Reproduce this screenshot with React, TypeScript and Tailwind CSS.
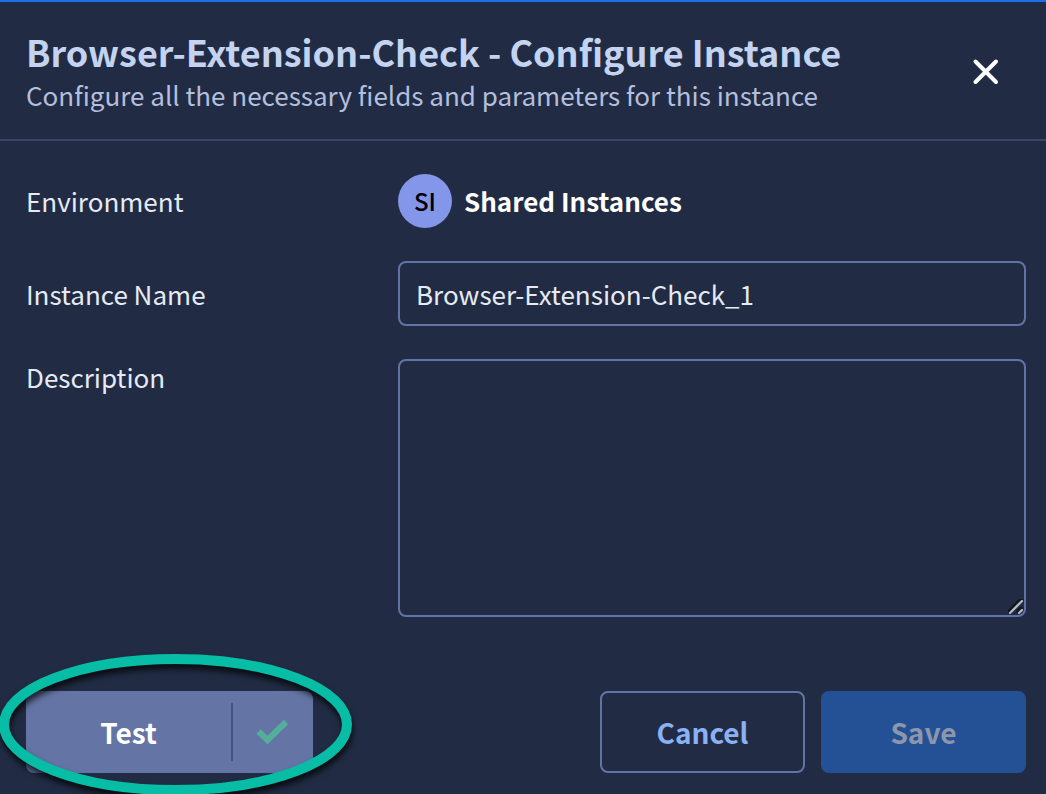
import { useId, useState } from "react";

type Environment = {
    initials: string;
    name: string;
}

const environment: Environment = {
    initials: "SI",
    name: "Shared Instances",
};

const CloseIcon = () => (
    <svg width="28" height="28" viewBox="0 0 28 28" fill="none" stroke="currentColor" strokeWidth="4" strokeLinecap="round" aria-hidden="true">
        <path d="M3.5 3.5L24 24M24 3.5L3.5 24" />
    </svg>
);

const CheckIcon = () => (
    <svg width="34" height="26" viewBox="0 0 34 26" fill="none" stroke="#52b09a" strokeWidth="6" aria-hidden="true">
        <path d="M2.5 12.5L11.5 21L30 3" strokeLinejoin="miter" />
    </svg>
);

const ResizeGrip = () => (
    <svg className="pointer-events-none absolute right-0.5 bottom-0.5 size-4" viewBox="0 0 16 16" fill="none" strokeLinecap="round" aria-hidden="true">
        <path d="M2 12.5L13 1.5M11 12.5L13 10.5" stroke="#0f141f" strokeWidth="5" />
        <path d="M2 14L14 2M11 14L14 11" stroke="#b4b8bf" strokeWidth="2.4" />
    </svg>
);

// Hand-drawn style ring that points at the Test button
const Highlight = () => (
    <svg className="pointer-events-none absolute -top-10 -left-7 h-[152px] w-[360px] overflow-visible" viewBox="0 0 360 152" fill="none" aria-hidden="true">
        <ellipse
            cx="177.5"
            cy="73.5"
            rx="171.5"
            ry="65.5"
            stroke="#08bda5"
            strokeWidth="10"
            className="drop-shadow-[1px_5px_3px_rgba(0,0,0,0.75)]"
        />
    </svg>
);

export default function App() {
    const [name, setName] = useState("Browser-Extension-Check_1");
    const [description, setDescription] = useState("");

    const nameId = useId();
    const descriptionId = useId();

    return (
        <main className="min-h-screen overflow-hidden border-t-2 border-[#1f6fea] bg-[#212c44] font-['Noto_Sans_CJK_SC','Noto_Sans',sans-serif] text-[26px] leading-8 text-[#e6eaf3]">
            <header className="flex items-center justify-between border-b-2 border-[#38466a] pt-[26px] pr-6 pb-[23px] pl-[26px]">
                <div>
                    <h1 className="text-[36px] leading-[46px] font-bold text-[#c3d3f0]">
                        Browser-Extension-Check - Configure Instance
                    </h1>
                    <p className="leading-[42px] text-[#b3bfdd]">
                        Configure all the necessary fields and parameters for this instance
                    </p>
                </div>
                <button type="button" aria-label="Close" className="flex size-[72px] items-center justify-center text-white">
                    <CloseIcon />
                </button>
            </header>

            <form className="pt-[33px] pr-5 pb-5 pl-[26px]" onSubmit={(e) => e.preventDefault()}>
                <div className="grid grid-cols-[372px_1fr] gap-y-[33px]">
                    <span className="self-center">Environment</span>
                    <div className="flex items-center gap-3">
                        <span className="flex size-[54px] items-center justify-center rounded-full bg-[#8496ea] text-2xl font-medium text-black">
                            {environment.initials}
                        </span>
                        <span className="font-bold text-white">{environment.name}</span>
                    </div>

                    <label htmlFor={nameId} className="self-center">Instance Name</label>
                    <input
                        id={nameId}
                        type="text"
                        value={name}
                        onChange={(e) => setName(e.target.value)}
                        className="h-[65px] w-full rounded-lg border-2 border-[#6373a6] bg-transparent px-4 outline-none"
                    />

                    <label htmlFor={descriptionId} className="self-start pt-0.5">Description</label>
                    <div className="relative">
                        <textarea
                            id={descriptionId}
                            value={description}
                            onChange={(e) => setDescription(e.target.value)}
                            className="block h-[258px] w-full resize-none rounded-lg border-2 border-[#6373a6] bg-transparent px-4 py-3 outline-none"
                        />
                        <ResizeGrip />
                    </div>
                </div>

                <div className="mt-[74px] flex items-center justify-between">
                    <div className="relative">
                        <button type="button" className="flex h-[82px] items-center rounded-lg bg-[#6474a4] font-bold text-white">
                            <span className="w-[205px] text-[28px]">Test</span>
                            <span className="flex h-[58px] w-[82px] items-center justify-center border-l-2 border-[#44527f]">
                                <CheckIcon />
                            </span>
                        </button>
                        <Highlight />
                    </div>
                    <div className="flex gap-4">
                        <button type="button" className="h-[82px] w-[205px] rounded-lg border-2 border-[#6373a6] text-[28px] font-bold text-[#8bb1f5]">
                            Cancel
                        </button>
                        <button type="submit" disabled className="h-[82px] w-[205px] rounded-lg bg-[#245196] text-[28px] font-bold text-[#8d97ab]">
                            Save
                        </button>
                    </div>
                </div>
            </form>
        </main>
    );
}
